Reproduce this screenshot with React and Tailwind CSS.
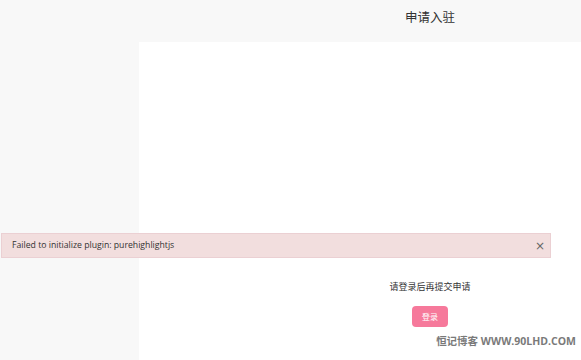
import React from "react";

const cjk = { fontFamily: '"Noto Sans CJK SC", "Noto Sans", sans-serif' };

const App = () => {
  return (
    <div className="relative w-[581px] h-[360px] overflow-hidden bg-[#f8f8f8]">
      <div className="flex h-full">
        {/* left sidebar */}
        <div className="w-[139px] shrink-0 bg-[#f8f8f8]"></div>

        {/* main column (wider than the window) */}
        <div className="w-[582px] shrink-0 flex flex-col">
          <div className="h-[42px] flex justify-center pt-[11px]" style={cjk}>
            <span className="text-[12.5px] text-[#333] leading-none">申请入驻</span>
          </div>
          <div className="flex-1 bg-white flex flex-col items-center pt-[240px]" style={cjk}>
            <p className="text-[9px] text-[#333] leading-none">请登录后再提交申请</p>
            <button className="mt-[15px] w-[36px] h-[21px] rounded-[4px] bg-[#f6799b] text-white text-[8px] leading-none">
              登录
            </button>
          </div>
        </div>
      </div>

      {/* error alert */}
      <div className="absolute left-[1px] top-[233px] w-[550px] h-[25px] bg-[#f2dede] border border-[#ebd0d3] flex items-center justify-between pl-[10px] pr-[5px]">
        <span
          className="text-[8.7px] text-[#333]"
          style={{ fontFamily: '"Open Sans", "Noto Sans", sans-serif' }}
        >
          Failed to initialize plugin: purehighlightjs
        </span>
        <span className="text-[12px] text-[#666] leading-none" style={{ fontFamily: '"DejaVu Sans", sans-serif' }}>
          ×
        </span>
      </div>

      {/* watermark */}
      <div
        className="absolute right-[5px] top-[334px] text-[10.5px] font-bold text-[#7a7a7a] whitespace-nowrap"
        style={{ fontFamily: '"Open Sans", "Noto Sans CJK SC", sans-serif' }}
      >
        恒记博客 WWW.90LHD.COM
      </div>
    </div>
  );
};

export default App;
